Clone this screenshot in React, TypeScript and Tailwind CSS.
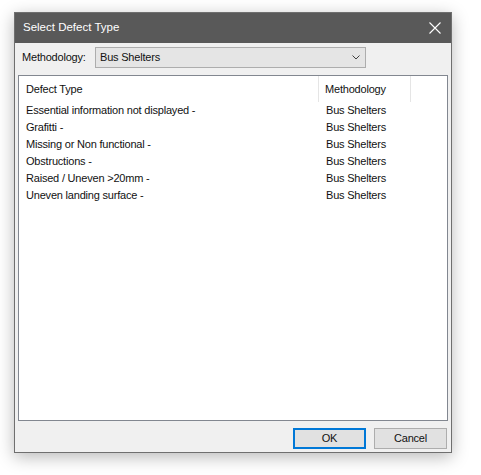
const rows = [
  "Essential information not displayed -",
  "Grafitti -",
  "Missing or Non functional -",
  "Obstructions -",
  "Raised / Uneven >20mm -",
  "Uneven landing surface -",
];

export default function App() {
  return (
    <div
      className="w-[481px] h-[475px] bg-white pt-[12px] pl-[14px] text-[11px] tracking-[-0.2px] text-[#111]"
      style={{ fontFamily: '"Liberation Sans", Arial, sans-serif' }}
    >
      <div className="w-[438px] h-[441px] flex flex-col border border-[#6f6f6f] bg-[#f0f0f0] shadow-[0_4px_16px_rgba(0,0,0,0.28)]">
        <div className="h-[30px] shrink-0 bg-[#595959] flex items-center justify-between pl-[8px] pr-[9px] text-white text-[11.5px] tracking-normal">
          <span>Select Defect Type</span>
          <svg width="12" height="12" viewBox="0 0 12 12" className="mr-[1px]">
            <path d="M0.5 0.5 L11.5 11.5 M11.5 0.5 L0.5 11.5" stroke="#ffffff" strokeWidth="1.1" />
          </svg>
        </div>
        <div className="flex-1 flex flex-col px-[3px] pt-[4px] pb-[3px]">
          <div className="flex items-center h-[21px] pl-[4px]">
            <span className="w-[73px] shrink-0">Methodology:</span>
            <div className="w-[271px] h-[21px] border border-[#adadad] bg-[#e5e5e5] flex items-center justify-between pl-[4px] pr-[5px]">
              <span>Bus Shelters</span>
              <svg width="8" height="5" viewBox="0 0 8 5">
                <path d="M0.5 0.5 L4 4 L7.5 0.5" stroke="#404040" strokeWidth="1" fill="none" />
              </svg>
            </div>
          </div>
          <div className="mt-[7px] h-[346px] border border-[#828790] bg-white flex flex-col">
            <div className="flex h-[26px] shrink-0">
              <div className="w-[300px] border-r border-[#e5e5e5] pl-[7px] flex items-center">Defect Type</div>
              <div className="w-[92px] border-r border-[#e5e5e5] pl-[6px] flex items-center">Methodology</div>
            </div>
            <div className="flex flex-col">
              {rows.map((r) => (
                <div key={r} className="flex h-[17px] items-center">
                  <div className="w-[300px] pl-[7px]">{r}</div>
                  <div className="pl-[7px]">Bus Shelters</div>
                </div>
              ))}
            </div>
          </div>
          <div className="flex justify-end gap-[8px] mt-[7px] pr-[1px]">
            <button className="w-[73px] h-[21px] border-2 border-[#0078d7] bg-[#e1e1e1] flex items-center justify-center">OK</button>
            <button className="w-[73px] h-[21px] border border-[#adadad] bg-[#e1e1e1] flex items-center justify-center">Cancel</button>
          </div>
        </div>
      </div>
    </div>
  );
}
